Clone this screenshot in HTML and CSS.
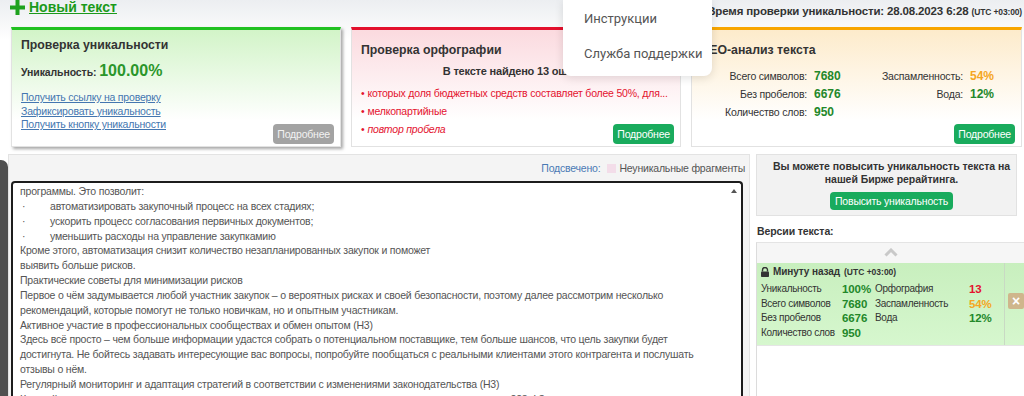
FILE: index.html
```html
<!DOCTYPE html>
<html lang="ru">
<head>
  <meta charset="UTF-8">
  <meta name="viewport" content="width=device-width, initial-scale=1.0">
  <title>Проверка уникальности</title>
  <link rel="stylesheet" href="styles.css">
</head>
<body>
  <div class="page">
    <header class="topbar">
      <a class="new-text" href="#">
        <svg class="plus" width="15" height="15" viewBox="0 0 15 15"><path d="M5.5 0h4v5.5H15v4H9.5V15h-4V9.5H0v-4h5.5z" fill="#1ea21e"/></svg>
        <span>Новый текст</span>
      </a>
      <div class="check-time">Время проверки уникальности: 28.08.2023 6:28 <small>(UTC +03:00)</small></div>
    </header>

    <nav class="help-menu">
      <a href="#">Инструкции</a>
      <a href="#">Служба поддержки</a>
    </nav>

    <section class="cards">
      <div class="card card-unique">
        <h3 class="card-title">Проверка уникальности</h3>
        <div class="card-main">
          <div class="card-content">
            <div class="uniq">Уникальность: <b>100.00%</b></div>
            <div class="links">
              <a href="#">Получить ссылку на проверку</a>
              <a href="#">Зафиксировать уникальность</a>
              <a href="#">Получить кнопку уникальности</a>
            </div>
          </div>
          <a class="more more-grey" href="#">Подробнее</a>
        </div>
      </div>

      <div class="card card-spell">
        <h3 class="card-title">Проверка орфографии</h3>
        <div class="found">В тексте найдено 13 ошибок</div>
        <div class="card-main">
          <ul class="errors">
            <li>которых доля бюджетных средств составляет более 50%, для...</li>
            <li>мелкопартийные</li>
            <li><i>повтор пробела</i></li>
          </ul>
          <a class="more" href="#">Подробнее</a>
        </div>
      </div>

      <div class="card card-seo">
        <h3 class="card-title">SEO-анализ текста</h3>
        <div class="card-main">
          <div class="seo-grid">
            <span class="lbl">Всего символов:</span><b class="ok">7680</b>
            <span class="lbl">Заспамленность:</span><b class="warn">54%</b>
            <span class="lbl">Без пробелов:</span><b class="ok">6676</b>
            <span class="lbl">Вода:</span><b class="ok">12%</b>
            <span class="lbl">Количество слов:</span><b class="ok">950</b>
          </div>
          <a class="more" href="#">Подробнее</a>
        </div>
      </div>
    </section>

    <section class="workspace">
      <div class="edge"></div>

      <div class="text-panel">
        <div class="panel-head">
          <span class="hl-label">Подсвечено:</span>
          <span class="hl-swatch"></span>
          <span>Неуникальные фрагменты</span>
        </div>
        <div class="editor">
          <span class="scroll-up"></span>
          <div>программы. Это позволит:</div>
          <div class="li">автоматизировать закупочный процесс на всех стадиях;</div>
          <div class="li">ускорить процесс согласования первичных документов;</div>
          <div class="li">уменьшить расходы на управление закупкамию</div>
          <div>Кроме этого, автоматизация снизит количество незапланированных закупок и поможет</div>
          <div>выявить больше рисков.</div>
          <div>Практические советы для минимизации рисков</div>
          <div>Первое о чём задумывается любой участник закупок – о вероятных рисках и своей безопасности, поэтому далее рассмотрим несколько</div>
          <div>рекомендаций, которые помогут не только новичкам, но и опытным участникам.</div>
          <div>Активное участие в профессиональных сообществах и обмен опытом (Н3)</div>
          <div>Здесь всё просто – чем больше информации удастся собрать о потенциальном поставщике, тем больше шансов, что цель закупки будет</div>
          <div>достигнута. Не бойтесь задавать интересующие вас вопросы, попробуйте пообщаться с реальными клиентами этого контрагента и послушать</div>
          <div>отзывы о нём.</div>
          <div>Регулярный мониторинг и адаптация стратегий в соответствии с изменениями законодательства (Н3)</div>
          <div>Каждый год в законодательство о закупках вносятся поправки, поэтому важно следить за изменениями 223-ФЗ и своевременно</div>
        </div>
      </div>

      <aside class="side">
        <div class="promo">
          <p>Вы можете повысить уникальность текста на нашей Бирже рерайтинга.</p>
          <a class="btn-green" href="#">Повысить уникальность</a>
        </div>

        <h4 class="versions-title">Версии текста:</h4>
        <div class="versions">
          <div class="versions-up">
            <svg width="14" height="9" viewBox="0 0 14 9"><path d="M1.5 7.5L7 2l5.5 5.5" fill="none" stroke="#c9c9c9" stroke-width="3"/></svg>
          </div>
          <div class="version">
            <div class="version-main">
              <div class="version-title">
                <svg class="lock" width="8" height="10" viewBox="0 0 8 10"><path d="M1.5 4.5V3a2.5 2.5 0 0 1 5 0v1.5" fill="none" stroke="#333" stroke-width="1.4"/><rect x="0" y="4.5" width="8" height="5.5" rx="0.8" fill="#333"/></svg>
                <b>Минуту назад</b> <small>(UTC +03:00)</small>
              </div>
              <div class="version-grid">
                <span>Уникальность</span><b class="ok">100%</b>
                <span>Орфография</span><b class="bad">13</b>
                <span>Всего символов</span><b class="ok">7680</b>
                <span>Заспамленность</span><b class="warn">54%</b>
                <span>Без пробелов</span><b class="ok">6676</b>
                <span>Вода</span><b class="ok">12%</b>
                <span>Количество слов</span><b class="ok">950</b>
              </div>
            </div>
            <div class="version-side">
              <a class="version-del" href="#">×</a>
            </div>
          </div>
        </div>
      </aside>
    </section>
  </div>
</body>
</html>
```

FILE: styles.css
```css
body {
  margin: 0;
  font-family: "Liberation Sans", Arial, sans-serif;
  font-size: 10.5px;
  letter-spacing: -0.2px;
  color: #333;
  background: linear-gradient(#eceef1 0, #f6f7f8 22px, #fff 40px);
  overflow: hidden;
}

a {
  color: inherit;
}

.page {
  position: relative;
  width: 1024px;
  height: 396px;
  overflow: hidden;
}

/* top line */

.topbar {
  display: flex;
  justify-content: space-between;
  align-items: flex-start;
  height: 27px;
  padding: 0 2px 0 10px;
}

.new-text {
  display: flex;
  align-items: center;
  gap: 4px;
  margin-top: -1px;
  color: #1b9a1b;
  font-size: 14px;
  font-weight: bold;
  line-height: 16px;
  letter-spacing: 0;
}

.new-text span {
  text-decoration: underline;
}

.check-time {
  margin-top: 4px;
  font-size: 11.5px;
  font-weight: bold;
  line-height: 14px;
  letter-spacing: -0.15px;
  color: #333;
}

.check-time small {
  font-size: 8.5px;
}

/* dropdown opened over the page */

.help-menu {
  position: absolute;
  top: 0;
  left: 563px;
  width: 149px;
  height: 76px;
  display: flex;
  flex-direction: column;
  padding-top: 6px;
  box-sizing: border-box;
  background: #fff;
  border-radius: 0 0 8px 8px;
  box-shadow: 0 2px 10px rgba(0, 0, 0, 0.12);
  z-index: 5;
}

.help-menu a {
  padding-left: 21px;
  height: 35px;
  line-height: 26px;
  font-family: Roboto, "Liberation Sans", sans-serif;
  font-size: 13px;
  letter-spacing: 0;
  color: #555;
  text-decoration: none;
}

/* result cards */

.cards {
  display: flex;
  gap: 10px;
  padding-left: 11px;
}

.card {
  display: flex;
  flex-direction: column;
  box-sizing: border-box;
  width: 330px;
  height: 120px;
  padding: 12px 6px 2px 9px;
  border: 1px solid #e2e2e2;
  border-top: 3px solid;
}

.card-unique {
  padding-top: 7px;
  border-top-color: #21c121;
  background: linear-gradient(#d2f4c8, #fff 78%);
  box-shadow: 2px 2px 3px rgba(0, 0, 0, 0.35);
}

.card-spell {
  border-top-color: #e3102c;
  background: linear-gradient(#fbdadf, #fff 78%);
}

.card-seo {
  width: 331px;
  border-top-color: #f8a600;
  background: linear-gradient(#fdebcb, #fff 78%);
}

.card-title {
  margin: 0;
  font-size: 12.3px;
  line-height: 16px;
  letter-spacing: 0;
  color: #333;
}

/* content and button share one cell: button sits in the bottom-right corner */
.card-main {
  flex: 1;
  display: grid;
}

.card-main > * {
  grid-area: 1 / 1;
}

.card-content {
  align-self: start;
}

.uniq {
  margin-top: 8px;
  font-size: 10.5px;
  font-weight: bold;
  line-height: 20px;
  letter-spacing: -0.1px;
}

.uniq b {
  font-size: 16px;
  letter-spacing: 0;
  color: #2a962a;
}

.links {
  margin-top: 9px;
  display: flex;
  flex-direction: column;
  align-items: flex-start;
}

.links a {
  color: #4476b0;
  line-height: 13.5px;
}

.more {
  justify-self: end;
  align-self: end;
  height: 20px;
  padding: 0 4px;
  line-height: 20px;
  border-radius: 4px;
  background: #19ab5d;
  color: #fff;
  text-decoration: none;
  font-size: 10.5px;
}

.more-grey {
  background: #a3a3a3;
  color: #f2f2f2;
}

.found {
  margin-top: 5px;
  text-align: center;
  font-size: 11px;
  font-weight: bold;
  line-height: 16px;
}

.errors {
  align-self: end;
  margin: 0 0 6px;
  padding: 0;
  list-style: none;
  color: #e4132f;
}

.errors li {
  line-height: 18px;
  white-space: nowrap;
}

.errors li::before {
  content: "•";
  margin-right: 3px;
}

.seo-grid {
  align-self: start;
  margin-top: 9px;
  display: grid;
  grid-template-columns: 106px 50px 92px auto;
  column-gap: 7px;
  line-height: 18px;
}

.seo-grid .lbl {
  text-align: right;
}

.seo-grid b {
  font-size: 12px;
  letter-spacing: 0;
}

.ok {
  color: #23882a;
}

.warn {
  color: #f5a623;
}

.bad {
  color: #e4132f;
}

/* text + side column */

.workspace {
  display: flex;
  align-items: flex-start;
  margin-top: 7px;
}

.edge {
  width: 8px;
  height: 240px;
  margin-top: 6px;
  border-radius: 0 7px 0 0;
  background: #505050;
}

.text-panel {
  width: 742px;
  height: 260px;
  box-sizing: border-box;
  border: 1px solid #e3e3e3;
  background: #f4f4f4;
}

.panel-head {
  display: flex;
  justify-content: flex-end;
  align-items: center;
  gap: 3px;
  height: 26px;
  padding-right: 4px;
  color: #555;
}

.hl-label {
  color: #4a7ab4;
  margin-right: 4px;
}

.hl-swatch {
  width: 9px;
  height: 9px;
  background: #f3dde9;
}

.editor {
  position: relative;
  margin-left: 2px;
  width: 732px;
  height: 240px;
  box-sizing: border-box;
  padding: 1px 0 0 7px;
  border: 2px solid #1c1c1c;
  border-bottom: 0;
  border-radius: 4px 4px 0 0;
  background: #fff;
  color: #555;
  line-height: 14.85px;
  white-space: nowrap;
}

.editor .li {
  padding-left: 30px;
  position: relative;
}

.editor .li::before {
  content: "·";
  position: absolute;
  left: 2px;
}

.scroll-up {
  position: absolute;
  top: 6px;
  right: 4px;
  border-left: 3px solid transparent;
  border-right: 3px solid transparent;
  border-bottom: 4px solid #555;
}

.side {
  width: 268px;
  margin-left: 6px;
}

.promo {
  width: 261px;
  box-sizing: border-box;
  padding: 5px 4px 5px 14px;
  border: 1px solid #e2e2e2;
  background: #f2f2f2;
  text-align: center;
}

.promo p {
  margin: 0 0 6px;
  font-size: 10.5px;
  font-weight: bold;
  line-height: 13px;
  letter-spacing: -0.05px;
}

.btn-green {
  display: inline-block;
  height: 18px;
  padding: 0 5px;
  line-height: 18px;
  border-radius: 4px;
  background: #19ab5d;
  color: #fff;
  text-decoration: none;
}

.versions-title {
  margin: 8px 0 3px 1px;
  font-size: 10.5px;
  line-height: 15px;
  letter-spacing: -0.1px;
}

.versions {
  height: 160px;
  border-left: 1px solid #dcdcdc;
  border-top: 1px solid #e4e4e4;
}

.versions-up {
  display: flex;
  justify-content: center;
  height: 20px;
  padding-top: 5px;
  box-sizing: border-box;
  background: #f6f6f6;
}

.version {
  display: flex;
  height: 82px;
  background: linear-gradient(#c8efbe, #d6f7ce);
  border-bottom: 1px solid #e5e5e5;
}

.version-main {
  width: 250px;
  padding: 2px 0 0 4px;
  box-sizing: border-box;
}

.version-title {
  display: flex;
  align-items: center;
  gap: 4px;
  line-height: 14px;
  font-size: 10px;
  letter-spacing: -0.1px;
}

.version-title small {
  font-size: 8.5px;
  font-weight: bold;
  letter-spacing: 0;
}

.version-grid {
  margin-top: 3px;
  display: grid;
  grid-template-columns: 81px 33px 94px auto;
  font-size: 10px;
  letter-spacing: -0.3px;
  line-height: 14.7px;
  white-space: nowrap;
}

.version-grid b {
  font-size: 11.5px;
  letter-spacing: -0.1px;
}

.version-side {
  flex: 1;
  border-left: 1px solid #c9d9c4;
  padding: 30px 0 0 3px;
}

.version-del {
  display: block;
  width: 16px;
  height: 16px;
  border-radius: 2px;
  background: #cfb68c;
  color: #fff;
  text-align: center;
  line-height: 16px;
  font-size: 14px;
  font-weight: bold;
  text-decoration: none;
}
```
